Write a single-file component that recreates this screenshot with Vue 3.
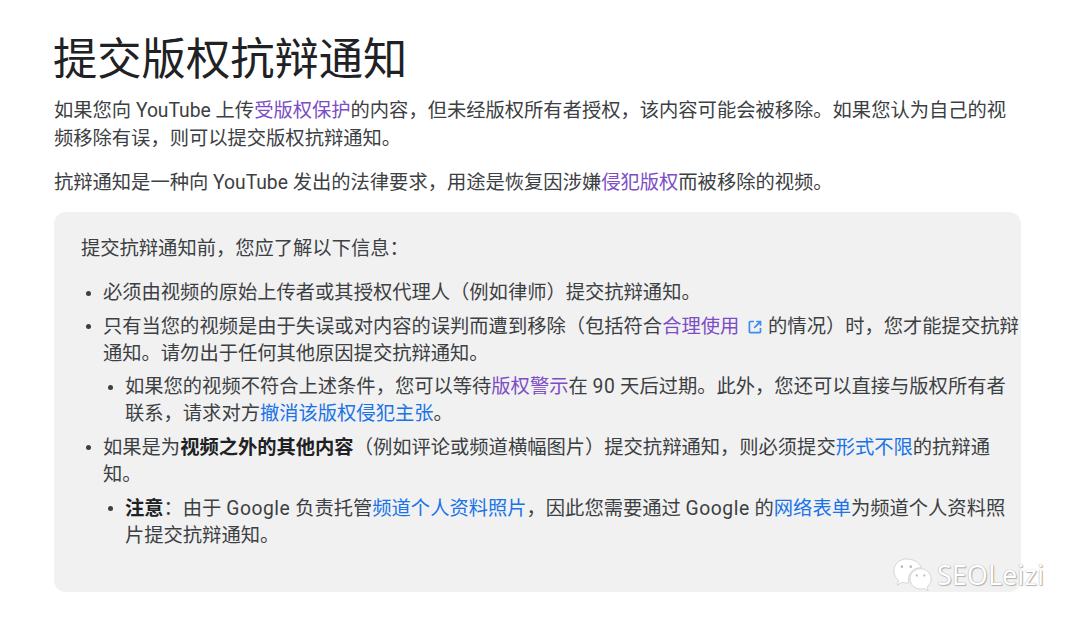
<template>
  <main class="page">
    <h1>提交版权抗辩通知</h1>
    <p>如果您向 YouTube 上传<a class="visited">受版权保护</a>的内容，但未经版权所有者授权，该内容可能会被移除。如果您认为自己的视频移除有误，则可以提交版权抗辩通知。</p>
    <p class="second">抗辩通知是一种向 YouTube 发出的法律要求，用途是恢复因涉嫌<a class="visited">侵犯版权</a>而被移除的视频。</p>
    <section class="note">
      <p class="lead">提交抗辩通知前，您应了解以下信息：</p>
      <ul>
        <li>必须由视频的原始上传者或其授权代理人（例如律师）提交抗辩通知。</li>
        <li>只有当您的视频是由于失误或对内容的误判而遭到移除（包括符合<a class="visited">合理使用</a>
          <svg class="ext" viewBox="0 0 14 14" width="14" height="14" aria-hidden="true"><path d="M6 1.500H2.200a.8.8 0 0 0-.8.8v9.500a.8.8 0 0 0 .8.8h9.500a.8.8 0 0 0 .8-.8V8M8.200 1.500h4.300v4.300M12.300 1.700 6.200 7.800" fill="none" stroke="#3f8cf0" stroke-width="1.700"/></svg>
          的情况）时，您才能提交抗辩通知。请勿出于任何其他原因提交抗辩通知。
          <ul>
            <li>如果您的视频不符合上述条件，您可以等待<a class="visited">版权警示</a>在 <span class="wide">90</span> 天后过期。此外，您还可以直接与版权所有者联系，请求对方<a>撤消该版权侵犯主张</a>。</li>
          </ul>
        </li>
        <li>如果是为<b>视频之外的其他内容</b>（例如评论或频道横幅图片）提交抗辩通知，则必须提交<a>形式不限</a>的抗辩通知。
          <ul>
            <li><b>注意</b>：由于 <span class="wide">Google</span> 负责托管<a>频道个人资料照片</a>，因此您需要通过 <span class="wide">Google</span> 的<a>网络表单</a>为频道个人资料照片提交抗辩通知。</li>
          </ul>
        </li>
      </ul>
    </section>
    <div class="mark">
      <svg width="39" height="33" viewBox="0 0 46 34" preserveAspectRatio="none" aria-hidden="true">
        <path d="M16 1C7.700 1 1 6.600 1 13.500c0 4 2.200 7.400 5.700 9.700L5 28l5.800-3c1.600.5 3.400.8 5.200.8 1 0 2-.1 2.900-.3-.4-1.100-.6-2.300-.6-3.500 0-6.700 6.300-12 14-12h.9C31 4.600 24.100 1 16 1Z" fill="#fff" stroke="#c9c9c9" stroke-width=".8"/>
        <path d="M45 21.500C45 15.700 39.200 11 32.500 11S20 15.700 20 21.500 25.800 32 32.500 32c1.400 0 2.800-.2 4.100-.6L41.500 34l-1.300-4.100c2.900-1.900 4.800-5 4.800-8.400Z" fill="#fff" stroke="#c9c9c9" stroke-width=".8"/>
        <circle cx="10.500" cy="9" r="1.500" fill="#bbb"/><circle cx="21" cy="9" r="1.500" fill="#bbb"/>
        <circle cx="28" cy="18" r="1.200" fill="#bbb"/><circle cx="37" cy="18" r="1.200" fill="#bbb"/>
      </svg>
      <span class="mark-text">SEOLeizi</span>
    </div>
  </main>
</template>

<script setup>
</script>

<style>
html, body { margin: 0; background: #fff; }
</style>

<style scoped>
.page {
  position: relative;
  box-sizing: border-box;
  width: 1080px;
  height: 619px;
  padding: 32px 59px 0 54px;
  overflow: hidden;
  font-family: Roboto, "Noto Sans CJK SC", sans-serif;
  font-size: 19.300px;
  line-height: 27.800px;
  color: #3c4043;
}
h1 {
  margin: 0 0 9px -1px;
  font-size: 44.300px;
  line-height: 56px;
  font-weight: 400;
  color: #202124;
}
p { margin: 0 0 16.800px; }
.second { margin-bottom: 14.400px; }
a { color: #1a73e8; }
a.visited { color: #7c4dc4; }
b { color: #202124; font-weight: 700; }
.wide { letter-spacing: .55px; }
.note {
  box-sizing: border-box;
  height: 380px;
  padding: 23px 0 0 27px;
  background: #f1f1f1;
  border-radius: 12px;
  line-height: 27.100px;
}
.lead { margin-bottom: 17.500px; }
ul { list-style: none; margin: 0; padding: 0; }
.note > ul > li { padding-left: 22px; margin-bottom: 6.300px; position: relative; }
li ul { margin-top: 6.600px; }
li ul li { position: relative; padding-left: 22px; }
li::before {
  content: "";
  position: absolute;
  left: 4.500px;
  top: 11.500px;
  width: 5px;
  height: 5px;
  border-radius: 50%;
  background: #3c4043;
}
.ext { vertical-align: -1px; margin: 0 1px 0 9px; }
.mark {
  position: absolute;
  left: 893px;
  top: 556px;
  display: flex;
  align-items: center;
  gap: 5px;
  color: #fff;
  font-family: "Noto Sans", sans-serif;
  font-size: 27px;
  line-height: 34px;
  text-shadow: 0 0 1px #8a8a8a, 1px 1px 1px #b5b5b5;
}
.mark-text { padding-top: 2px; }
</style>
